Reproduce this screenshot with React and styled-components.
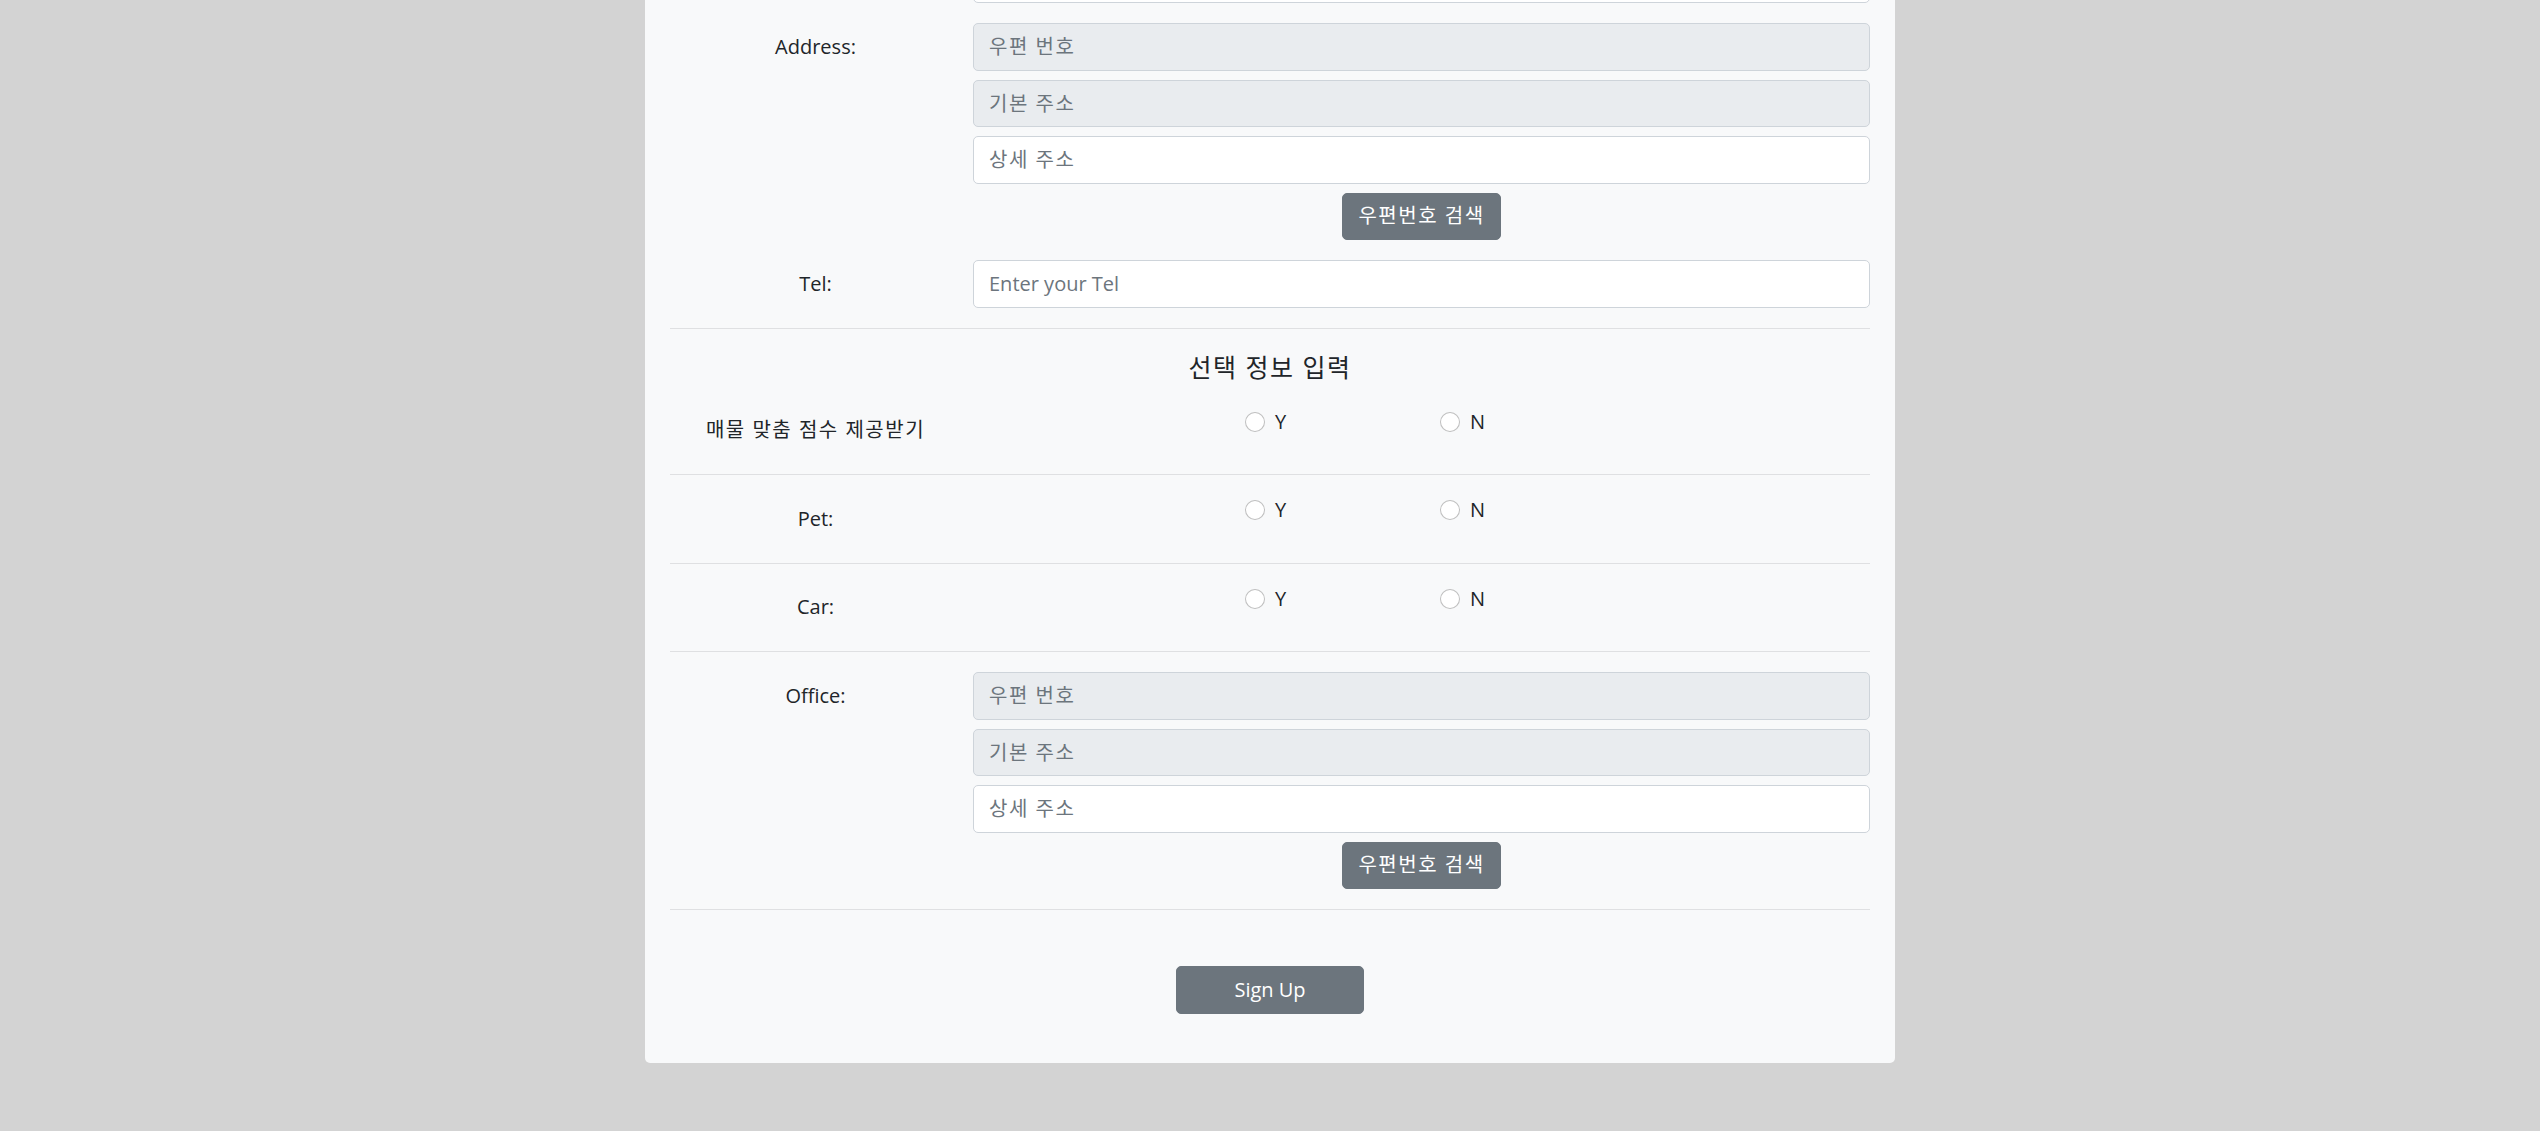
import React from 'react';
import styled, { createGlobalStyle } from 'styled-components';

const GlobalStyle = createGlobalStyle`
  html, body {
    margin: 0;
    padding: 0;
    background: #d3d3d3;
  }

  body {
    font-family: "Open Sans", "Noto Sans CJK KR", sans-serif;
    font-size: 20px;
    line-height: 1.5;
    color: #212529;
  }

  * {
    box-sizing: border-box;
  }
`;

// Hangul in the reference runs a little wider than Noto Sans CJK
const KO_SPACING = '1.5px';

const Page = styled.div`
  min-height: 1131px;
  overflow: hidden;
`;

// the page is scrolled: the card's top lies above the viewport
const Card = styled.form`
  width: 1250px;
  margin: -44.5px auto 68px;
  padding: 0 25px 49px;
  background: #f8f9fa;
  border-radius: 5px;
`;

const Block = styled.div`
  display: flex;
  flex-direction: column;
  gap: 20px;
`;

const FormRow = styled.div`
  display: grid;
  grid-template-columns: 291px 1fr;
  column-gap: 12px;
  align-items: start;
`;

const Label = styled.label`
  display: block;
  padding: 8.75px 0;
  line-height: 30px;
  text-align: center;
  color: #212529;
  letter-spacing: ${(p) => (p.$ko ? KO_SPACING : 'normal')};
`;

const Fields = styled.div`
  display: flex;
  flex-direction: column;
  gap: 9px;
`;

const Input = styled.input`
  display: block;
  width: 100%;
  height: 47.5px;
  padding: 0 15px;
  font-family: inherit;
  font-size: 20px;
  color: #212529;
  background: #fff;
  border: 1px solid #ced4da;
  border-radius: 5px;
  outline: none;
  letter-spacing: ${(p) => (p.$ko ? KO_SPACING : 'normal')};

  &[readonly] {
    background: #e9ecef;
  }

  &::placeholder {
    color: #6c757d;
    opacity: 1;
  }
`;

const Button = styled.button`
  height: ${(p) => (p.$tall ? '48px' : '47.5px')};
  padding: 0 ${(p) => (p.$wide ? '57px' : '15px')};
  font-family: inherit;
  font-size: 20px;
  line-height: 30px;
  color: #fff;
  background: #6c757d;
  border: 1px solid #6c757d;
  border-radius: 5px;
  letter-spacing: ${(p) => (p.$ko ? KO_SPACING : 'normal')};
  cursor: pointer;
`;

const SearchButton = styled(Button)`
  align-self: center;
`;

const Divider = styled.hr`
  height: 0;
  margin: 20px 0;
  border: 0;
  border-top: 1px solid #dfe0e2;
`;

const SectionTitle = styled.h5`
  margin: 0 0 25px;
  padding-top: 3px;
  font-size: 25px;
  font-weight: 400;
  line-height: 30px;
  letter-spacing: ${KO_SPACING};
  text-align: center;
  color: #212529;
`;

const RadioGroup = styled.div`
  display: flex;
  padding-left: 272px;
`;

const RadioOption = styled.label`
  display: flex;
  align-items: flex-start;
  gap: 10px;
  width: 195px;
  line-height: 30px;
  cursor: pointer;
`;

const RadioInput = styled.input`
  appearance: none;
  width: 20px;
  height: 20px;
  margin: 5px 0 0;
  flex-shrink: 0;
  background: #fff;
  border: 1px solid rgba(0, 0, 0, 0.25);
  border-radius: 50%;
`;

const SubmitRow = styled.div`
  display: flex;
  justify-content: center;
  padding-top: 36px;
`;

const AddressFields = ({ name }) => (
  <Fields>
    <Input name={ `${name}Zip` } placeholder="우편 번호" readOnly $ko />
    <Input name={ `${name}Base` } placeholder="기본 주소" readOnly $ko />
    <Input name={ `${name}Detail` } placeholder="상세 주소" $ko />
    <SearchButton type="button" $ko>우편번호 검색</SearchButton>
  </Fields>
);

const YesNo = ({ name }) => (
  <RadioGroup>
    <RadioOption>
      <RadioInput type="radio" name={ name } value="Y" />
      Y
    </RadioOption>
    <RadioOption>
      <RadioInput type="radio" name={ name } value="N" />
      N
    </RadioOption>
  </RadioGroup>
);

const options = [
  { name: 'score', label: '매물 맞춤 점수 제공받기', ko: true },
  { name: 'pet', label: 'Pet:' },
  { name: 'car', label: 'Car:' },
];

export default function App () {
  return (
    <Page>
      <GlobalStyle />
      <Card onSubmit={ (e) => e.preventDefault() }>
        <Block>
          {/* previous field, scrolled out of view except its bottom edge */}
          <FormRow>
            <Label />
            <Input name="email" />
          </FormRow>
          <FormRow>
            <Label>Address:</Label>
            <AddressFields name="home" />
          </FormRow>
          <FormRow>
            <Label>Tel:</Label>
            <Input placeholder="Enter your Tel" />
          </FormRow>
        </Block>

        <Divider />
        <SectionTitle>선택 정보 입력</SectionTitle>

        {
          options.map((option, key) => (
            <React.Fragment key={ option.name }>
              { key > 0 && <Divider /> }
              <FormRow>
                <Label $ko={ option.ko }>{ option.label }</Label>
                <YesNo name={ option.name } />
              </FormRow>
            </React.Fragment>
          ))
        }

        <Divider />
        <FormRow>
          <Label>Office:</Label>
          <AddressFields name="office" />
        </FormRow>

        <Divider />
        <SubmitRow>
          <Button type="submit" $wide $tall>Sign Up</Button>
        </SubmitRow>
      </Card>
    </Page>
  );
}
